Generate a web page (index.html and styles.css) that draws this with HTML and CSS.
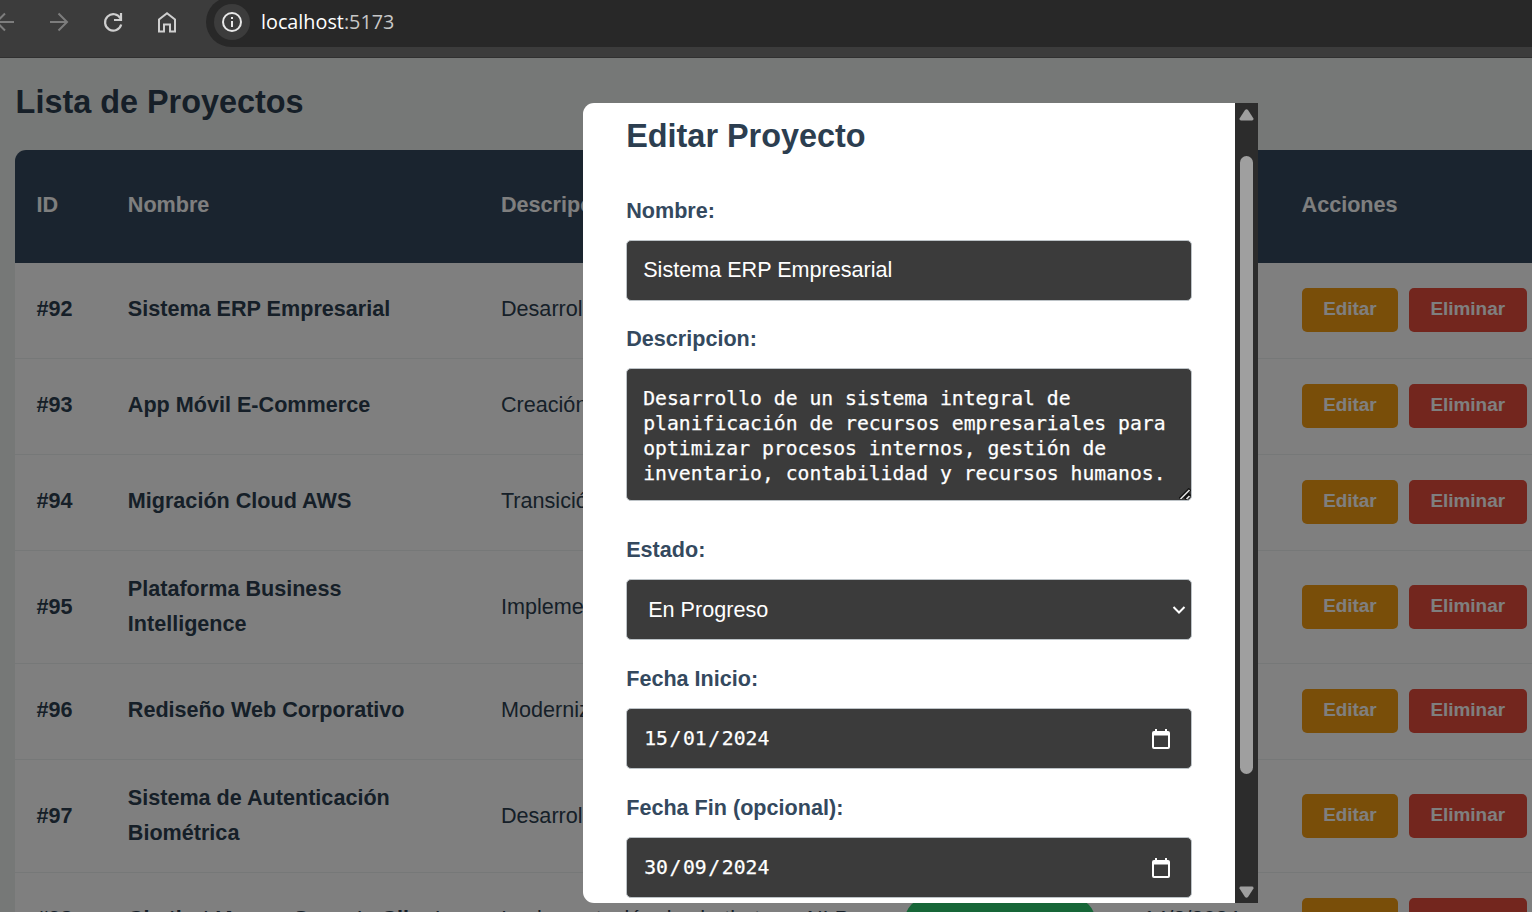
FILE: index.html
```
<!DOCTYPE html>
<html lang="es">
<head>
<meta charset="utf-8">
<title>Lista de Proyectos</title>
<link rel="stylesheet" href="styles.css">
</head>
<body>
<header class="browser">
  <svg class="nav-icons" width="182" height="46" viewBox="0 0 182 46" fill="none" stroke-width="2">
    <g stroke="#7d7d7d"><path d="M14 22H-2M5 13.5L-3.500 22L5 30.500"/><path d="M50 22H67M58.500 13.500L67 22L58.500 30.500"/></g>
    <g stroke="#cfcfcf"><path d="M120.500 18.500A8.200 8.200 0 1 0 121.200 24.500" stroke-width="2.200"/><path d="M121 13V20H114" stroke-width="2.200"/><path d="M159 31.500V19.500L167 13.200L175 19.500V31.500H170V24.500H164V31.500Z"/></g>
  </svg>
  <div class="address">
    <span class="info"><svg width="22" height="22" viewBox="0 0 22 22" fill="none" stroke="#e8e8e8" stroke-width="2"><circle cx="11" cy="11" r="9"/><path d="M11 10V16M11 6V8"/></svg></span>
    <span class="url">localhost<span class="port">:5173</span></span>
  </div>
</header>
<div class="viewport">
  <main class="page">
    <h1 class="title">Lista de Proyectos</h1>
    <div class="table">
      <div class="row head"><span>ID</span><span>Nombre</span><span>Descripción</span><span>Estado</span><span>Inicio</span><span>Acciones</span></div>
      <div class="row"><b>#92</b><b>Sistema ERP Empresarial</b><span>Desarrollo</span><span></span><span></span><div class="actions"><span class="btn edit">Editar</span><span class="btn delete">Eliminar</span></div></div>
      <div class="row"><b>#93</b><b>App Móvil E-Commerce</b><span>Creación</span><span></span><span></span><div class="actions"><span class="btn edit">Editar</span><span class="btn delete">Eliminar</span></div></div>
      <div class="row"><b>#94</b><b>Migración Cloud AWS</b><span>Transición</span><span></span><span></span><div class="actions"><span class="btn edit">Editar</span><span class="btn delete">Eliminar</span></div></div>
      <div class="row tall"><b>#95</b><b>Plataforma Business Intelligence</b><span>Implementación</span><span></span><span></span><div class="actions"><span class="btn edit">Editar</span><span class="btn delete">Eliminar</span></div></div>
      <div class="row"><b>#96</b><b>Rediseño Web Corporativo</b><span>Modernización</span><span></span><span></span><div class="actions"><span class="btn edit">Editar</span><span class="btn delete">Eliminar</span></div></div>
      <div class="row tall"><b>#97</b><b>Sistema de Autenticación Biométrica</b><span>Desarrollo</span><span></span><span></span><div class="actions"><span class="btn edit">Editar</span><span class="btn delete">Eliminar</span></div></div>
      <div class="row"><b>#98</b><b>Chatbot IA para Soporte Cliente</b><span>Implementación de chatbot con NLP</span><span class="badge"></span><span>14/2/2024</span><div class="actions"><span class="btn edit">Editar</span><span class="btn delete">Eliminar</span></div></div>
    </div>
  </main>
  <div class="overlay">
    <section class="modal">
      <div class="form">
        <h2 class="form-title">Editar Proyecto</h2>
        <div class="field"><span class="label">Nombre:</span><div class="control">Sistema ERP Empresarial</div></div>
        <div class="field area-field"><span class="label">Descripcion:</span><div class="control area">Desarrollo de un sistema integral de<br>planificación de recursos empresariales para<br>optimizar procesos internos, gestión de<br>inventario, contabilidad y recursos humanos.<svg class="grip" width="12" height="12" viewBox="0 0 12 12" fill="none"><path d="M1 11L11 1M6 11L11 6" stroke="#111" stroke-width="3.500"/><path d="M1.500 11L10.500 2M7.500 11L10.500 8" stroke="#ddd" stroke-width="1.700"/></svg></div></div>
        <div class="field"><span class="label">Estado:</span><div class="control select">En Progreso<svg width="14" height="10" viewBox="0 0 14 10" fill="none" stroke="#fff" stroke-width="2"><path d="M1.500 2L7 7.500L12.500 2"/></svg></div></div>
        <div class="field"><span class="label">Fecha Inicio:</span><div class="control date"><span>15<i>/</i>01<i>/</i>2024</span><svg width="18" height="20" viewBox="0 0 18 20"><path fill="#fff" fill-rule="evenodd" d="M3 0H5V2H13V0H15V2H16Q18 2 18 4V18Q18 20 16 20H2Q0 20 0 18V4Q0 2 2 2H3ZM2 6.500V18H16V6.500Z"/></svg></div></div>
        <div class="field"><span class="label">Fecha Fin (opcional):</span><div class="control date"><span>30<i>/</i>09<i>/</i>2024</span><svg width="18" height="20" viewBox="0 0 18 20"><path fill="#fff" fill-rule="evenodd" d="M3 0H5V2H13V0H15V2H16Q18 2 18 4V18Q18 20 16 20H2Q0 20 0 18V4Q0 2 2 2H3ZM2 6.500V18H16V6.500Z"/></svg></div></div>
      </div>
      <div class="scrollbar">
        <svg width="15" height="12" viewBox="0 0 15 12" fill="#9f9f9f"><path d="M6 1Q7.500-.5 9 1L14.500 9.500Q14.800 11.500 13 11.500H2Q.2 11.500.5 9.500Z"/></svg>
        <div class="thumb"></div>
        <svg class="down" width="15" height="12" viewBox="0 0 15 12" fill="#9f9f9f"><path d="M6 1Q7.500-.5 9 1L14.500 9.500Q14.800 11.500 13 11.500H2Q.2 11.500.5 9.500Z"/></svg>
      </div>
    </section>
  </div>
</div>
</body>
</html>
```
FILE: styles.css
```
* { box-sizing: border-box; }
body {
  margin: 0;
  width: 1532px;
  height: 912px;
  overflow: hidden;
  font: 21.6px/34.56px "Liberation Sans", Arial, sans-serif;
}
.browser {
  display: flex;
  height: 58px;
  background: #3c3c3c;
  border-bottom: 1px solid #303030;
}
.nav-icons { flex: none; margin-right: 24px; }
.address {
  display: flex;
  align-items: center;
  flex: 1;
  height: 50px;
  margin-top: -3px;
  padding-left: 8px;
  background: #282828;
  border-radius: 25px 0 0 25px;
}
.info {
  display: flex;
  align-items: center;
  justify-content: center;
  width: 36px;
  height: 36px;
  margin-right: 11px;
  background: #3c3c3c;
  border-radius: 50%;
}
.url { font: 19.8px/30px "Open Sans", sans-serif; color: #fff; }
.port { color: #c7c7c7; }
.viewport {
  position: relative;
  height: 854px;
  overflow: hidden;
  background: #ecf0ee;
}
.page { padding: 26px 0 0 15px; }
.title {
  margin: 0 0 30px 0.6px;
  font-size: 32.4px;
  line-height: 36px;
  color: #2c3e50;
}
.table {
  width: 1540px;
  background: #fff;
  border-radius: 11px 0 0 0;
  overflow: hidden;
  color: #2c3e50;
}
.row {
  display: grid;
  grid-template-columns: 48px 330px 361px 195px 115px 240px;
  column-gap: 43.2px;
  align-items: center;
  height: 96px;
  padding: 0 0 2px 21.6px;
  border-bottom: 1px solid #ecf0f1;
  white-space: nowrap;
}
.row b { white-space: normal; }
.row.tall { height: 113px; padding-bottom: 0; }
.row.head {
  height: 113px;
  background: #34495e;
  border: 0;
  color: #fff;
  font-weight: bold;
}
.actions { display: flex; gap: 10.6px; }
.btn {
  padding: 0 21.6px;
  height: 44px;
  border-radius: 5px;
  color: #fff;
  font-size: 18.9px;
  font-weight: bold;
  line-height: 42px;
}
.edit { background: #f39c12; }
.delete { background: #e74c3c; }
.badge {
  width: 190px;
  height: 44px;
  border-radius: 22px;
  background: #2ecc71;
}
.overlay {
  position: absolute;
  inset: 0;
  padding: 45px 0 0 583px;
  background: rgba(0, 0, 0, .5);
}
.modal {
  display: flex;
  width: 675px;
  height: 800px;
  overflow: hidden;
  border-radius: 11px 0 0 11px;
  background: #fff;
}
.form {
  flex: 1;
  padding: 15px 43.2px 0;
}
.form-title {
  margin: 0 0 40px;
  font-size: 32.4px;
  line-height: 36px;
  color: #2c3e50;
}
.field { margin-bottom: 22px; }
.field:first-of-type { margin-bottom: 21px; }
.area-field { margin-bottom: 32px; }
.label {
  display: block;
  height: 34px;
  margin-bottom: 12px;
  font-weight: bold;
  color: #34495e;
}
.control {
  height: 61px;
  padding: 0 16px;
  border: 1px solid #bdc3c7;
  border-radius: 5px;
  background: #3b3b3b;
  color: #fff;
  line-height: 58px;
}
.area {
  position: relative;
  height: 133px;
  padding: 17px 16px 0;
  font: 19.73px/25px "DejaVu Sans Mono", monospace;
  white-space: nowrap;
  -webkit-text-stroke: .25px #fff;
}
.grip { position: absolute; right: 0; bottom: 0; }
.select, .date {
  display: flex;
  align-items: center;
  justify-content: space-between;
}
.select { padding: 0 5px 0 21px; }
.date {
  padding: 0 21px 0 17px;
  font-family: "DejaVu Sans Mono", monospace;
  font-size: 19.73px;
  line-height: 60px;
  -webkit-text-stroke: .25px #fff;
}
.date i { padding: 0 1.6px; font-style: normal; }
.scrollbar {
  display: flex;
  flex-direction: column;
  align-items: center;
  width: 23px;
  padding: 6px 0 5px;
  background: #2c2c2c;
}
.thumb {
  width: 13px;
  height: 618px;
  margin-top: 35px;
  border-radius: 7px;
  background: #9f9f9f;
}
.down { margin-top: auto; transform: rotate(180deg); }
```
